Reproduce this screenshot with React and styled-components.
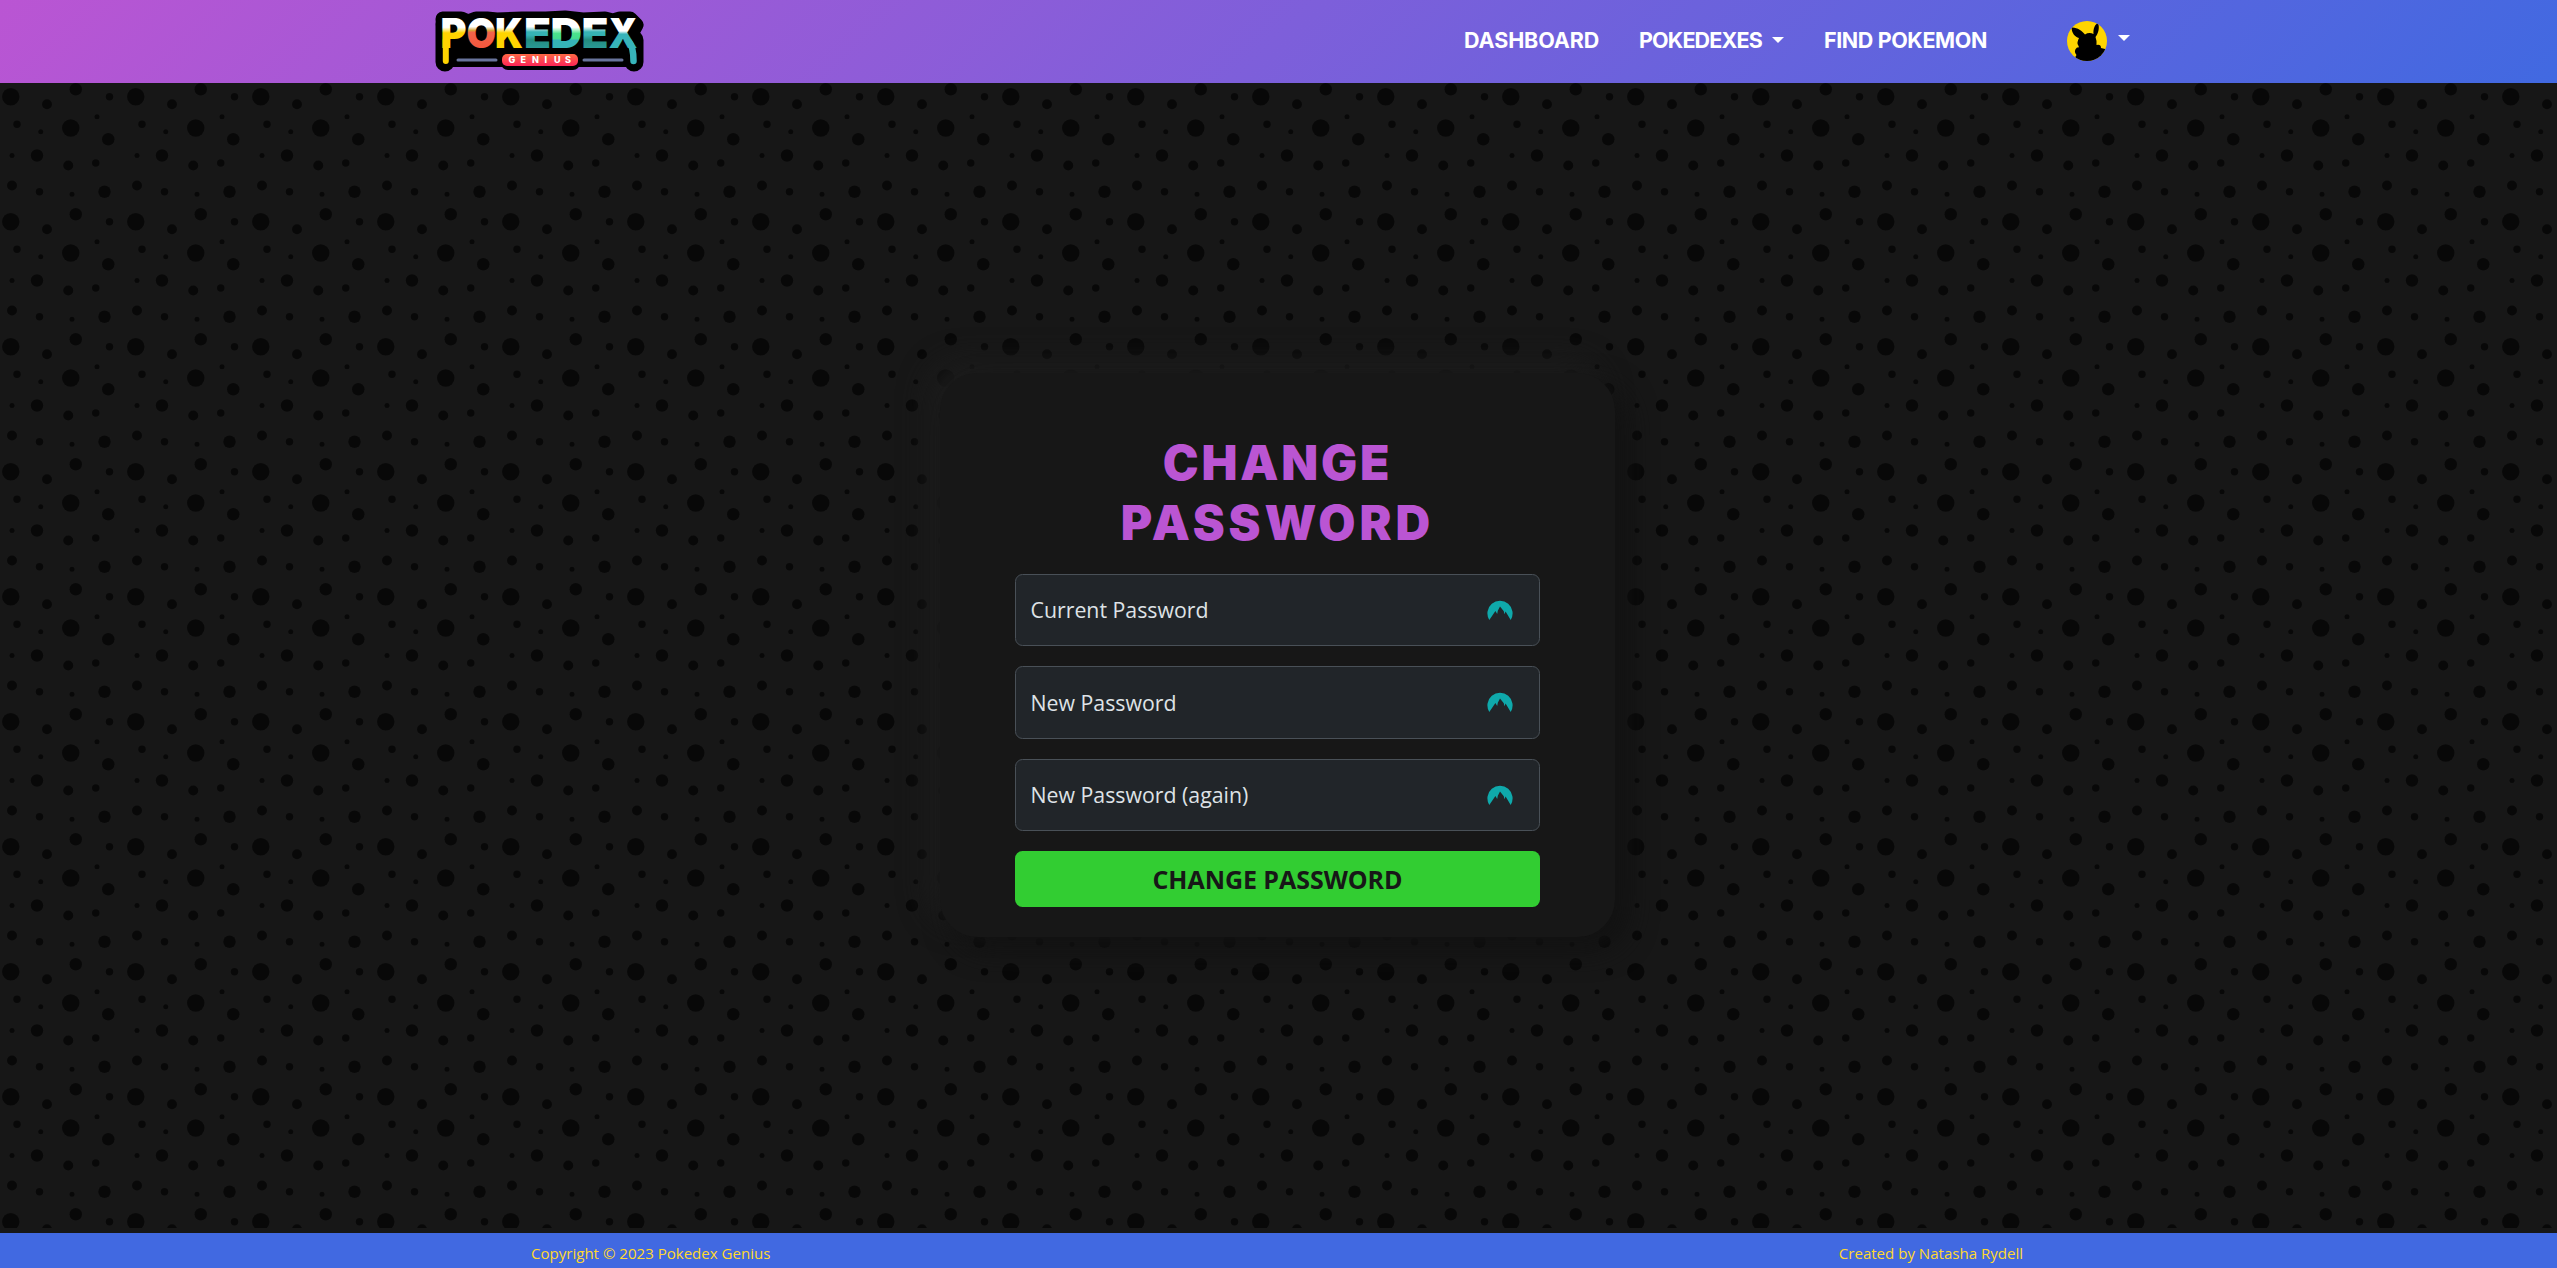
import React from "react";
import styled, { createGlobalStyle } from "styled-components";

const bubbles = [
  [11, 11, 7], [59, 36, 7], [16, 33, 3], [79, 64, 3], [34, 87, 3], [90, 11, 3],
  [12, 82, 4], [40, 17, 4], [63, 5, 5], [57, 66, 4], [86, 87, 5], [32, 58, 5],
  [89, 45, 5], [80, 27, 2], [60, 89, 2], [35, 39, 2], [12, 58, 2],
];

const bubbleTile = `url("data:image/svg+xml,${encodeURIComponent(
  `<svg xmlns="http://www.w3.org/2000/svg" width="125" height="125" viewBox="0 0 100 100">${bubbles
    .map(([x, y, r]) => `<circle cx="${x}" cy="${y}" r="${r}" fill="#080808"/>`)
    .join("")}</svg>`
)}")`;

const display = `Inter, "Liberation Sans", sans-serif`;
const body = `"Open Sans", "Noto Sans", sans-serif`;

const GlobalStyle = createGlobalStyle`
  * { box-sizing: border-box; }
  body { margin: 0; background: #171717; font-family: ${body}; }
`;

const Page = styled.div`
  display: flex;
  flex-direction: column;
  height: 1268px;
  overflow: hidden;
`;

const Nav = styled.nav`
  height: 83px;
  flex: none;
  padding: 0 427px 0 435px;
  display: flex;
  align-items: center;
  justify-content: space-between;
  background: linear-gradient(135deg, #ba55d3, #4169e1);
`;

const LogoSvg = styled.svg`
  width: 230px;
  height: 85px;
  margin-left: -10px;
  align-self: flex-start;
`;

const NavLinks = styled.div`
  display: flex;
  align-items: center;
  height: 100%;
`;

const NavLink = styled.a`
  display: flex;
  align-items: center;
  width: ${(p) => p.$width}px;
  margin-right: ${(p) => p.$gap}px;
  padding-bottom: 3px;
  color: #fff;
  font: 700 21.5px/32px ${display};
  letter-spacing: ${(p) => p.$track}px;
  white-space: nowrap;
`;

const Caret = styled.i`
  border: 6px solid transparent;
  border-top-color: #fff;
  border-bottom: 0;
  margin-left: auto;
`;

const Profile = styled.div`
  display: flex;
  align-items: center;
  gap: 11px;
  padding-bottom: 1px;

  ${Caret} { margin-bottom: 6px; }
`;

const Avatar = styled.svg`
  width: 40px;
  height: 40px;
  border-radius: 50%;
`;

const Main = styled.main`
  height: 1145px;
  flex: none;
  display: flex;
  justify-content: center;
  align-items: flex-start;
  padding-top: 290px;
  background: #171717 ${bubbleTile} -3px 0 / 125px 125px;
`;

const Card = styled.form`
  width: 675px;
  height: 564px;
  margin-right: 2px;
  padding: 60px 75px 30px;
  border-radius: 37.5px;
  background: #171717;
  box-shadow: 12.5px 12.5px 28px #121212, -12.5px -12.5px 28px #1d1d1d;
`;

const Title = styled.h1`
  margin: 0 0 20.5px;
  padding: 0 60px;
  color: #ba55d3;
  font: 900 48px/60px ${display};
  text-align: center;
`;

const TitleLine = styled.span`
  display: block;
  letter-spacing: ${(p) => p.$track}px;
`;

const Field = styled.label`
  display: flex;
  align-items: center;
  justify-content: space-between;
  height: 72.5px;
  margin-bottom: 20px;
  padding: 0 26px 0 14.5px;
  border: 1px solid #495057;
  border-radius: 7.5px;
  background: #212529;
  color: #dee2e6;
  font-size: 21.3px;
`;

const FieldIcon = styled.svg`
  width: 26px;
  height: 20px;
`;

const Submit = styled.button`
  display: block;
  width: 100%;
  height: 56px;
  border: 0;
  border-radius: 7.5px;
  background: #32cd32;
  color: #171717;
  font: 700 25px/36px ${body};
  letter-spacing: -0.05px;
`;

const Footer = styled.footer`
  height: 35px;
  margin-top: auto;
  padding: 5px 534px 0 531px;
  display: flex;
  justify-content: space-between;
  background: #4169e1;
  color: #ffd82e;
  font-size: 15.05px;
  line-height: 30px;
`;

const letters = [
  ["P", "url(#yellow)", 15.5, 26],
  ["O", "url(#red)", 41.5, 29.5],
  ["K", "url(#yellow)", 70, 28],
  ["E", "url(#teal)", 99, 27],
  ["D", "url(#green)", 125.5, 31.5],
  ["E", "url(#teal)", 156.5, 27],
  ["X", "url(#aqua)", 183.5, 29],
];

function Gradient({ id, stops }) {
  return (
    <linearGradient id={id} gradientUnits="userSpaceOnUse" x1="0" y1="18" x2="0" y2="49">
      {stops.map(([offset, color]) => (
        <stop key={offset} offset={offset} stopColor={color} />
      ))}
    </linearGradient>
  );
}

function Logo() {
  return (
    <LogoSvg viewBox="0 0 230 85" aria-label="Pokedex Genius">
      <defs>
        <Gradient id="yellow" stops={[[0, "#fff"], [0.3, "#fff"], [0.48, "#ffd400"], [1, "#ffd400"]]} />
        <Gradient id="red" stops={[[0, "#fff"], [0.28, "#fff"], [0.4, "#d8a53c"], [0.46, "#f0644a"], [1, "#f4553c"]]} />
        <Gradient id="teal" stops={[[0, "#fff"], [0.28, "#fff"], [0.45, "#36b3b4"], [0.55, "#36b3b4"], [0.7, "#238c80"], [1, "#2a9a97"]]} />
        <Gradient id="green" stops={[[0, "#fff"], [0.3, "#fff"], [0.5, "#4be38c"], [0.66, "#45dc90"], [0.72, "#35b3b7"], [1, "#35b3b7"]]} />
        <Gradient id="aqua" stops={[[0, "#fff"], [0.42, "#fff"], [0.52, "#37b4ba"], [1, "#37b4ba"]]} />
        <linearGradient id="pill" x1="0" y1="0" x2="0" y2="1">
          <stop offset="0" stopColor="#ff6a45" />
          <stop offset="1" stopColor="#ff2456" />
        </linearGradient>
      </defs>
      <g stroke="#000" strokeLinejoin="round" strokeLinecap="round" fill="none">
        <path strokeWidth="19" d="M20 24V62M209 40V62" />
        <path strokeWidth="14" d="M20 60H208M83 63H148" />
        <path strokeWidth="15" fill="#000" d="M18 19H36L43 22L51 19H62L72 20L97 19H121L140 18L158 20L180 19L188 21L195 19H205L211 25L205 36L209 48H20Z" />
      </g>
      <text y="48" fontFamily="Inter, sans-serif" fontWeight="900" fontSize="41.5">
        {letters.map(([ch, fill, x, width], i) => (
          <tspan
            key={i}
            x={x}
            textLength={width}
            lengthAdjust="spacingAndGlyphs"
            fill={fill}
          >
            {ch}
          </tspan>
        ))}
      </text>
      <path d="M20.8 40V61" stroke="#ffd400" strokeWidth="6" strokeLinecap="round" />
      <path d="M204 42Q208.500 47 208.500 61" stroke="#37b4ba" strokeWidth="6.500" strokeLinecap="round" fill="none" />
      <path d="M33 60H71M159 60H197" stroke="#68749c" strokeWidth="3" strokeLinecap="round" />
      <rect x="77" y="54" width="76" height="12" rx="5" fill="url(#pill)" />
      <text x="83.500 95.500 107 119.500 129 140" y="63.300" fill="#fff" fontFamily="Inter, sans-serif" fontWeight="800" fontSize="9">
        GENIUS
      </text>
    </LogoSvg>
  );
}

function Silhouette() {
  return (
    <Avatar viewBox="0 0 40 40">
      <rect width="40" height="40" fill="#ffd500" />
      <path d="M4.500 6.500C10 6 15 10 18 13.500Q22 11 26.500 13C26 8 28 3 31 2C33 7 31 13 28.500 16Q30 20 29.500 24Q34 23 34 27L38 28V40H10Q7 37 9.500 34Q6 30 10 26.500Q13 27 11 24Q9.500 22 12 17C8 15.500 5 13 4.500 6.500Z" />
    </Avatar>
  );
}

function PasswordField({ label }) {
  return (
    <Field>
      <span>{label}</span>
      <FieldIcon viewBox="0 0 26 20">
        <path fill="#0fa9ab" d="M2.300 20A12.600 12.600 0 1 1 23.700 20L18.600 11.500L17.400 14.200L16.800 11.300L13 6.500L10.800 10.800L10.200 14L8.400 11Z" />
      </FieldIcon>
    </Field>
  );
}

export default function App() {
  return (
    <Page>
      <GlobalStyle />
      <Nav>
        <Logo />
        <NavLinks>
          <NavLink $width={136} $gap={39} $track={-0.1}>DASHBOARD</NavLink>
          <NavLink $width={145} $gap={40} $track={-0.85}>POKEDEXES<Caret /></NavLink>
          <NavLink $width={163} $gap={80} $track={-0.4}>FIND POKEMON</NavLink>
          <Profile>
            <Silhouette />
            <Caret />
          </Profile>
        </NavLinks>
      </Nav>
      <Main>
        <Card>
          <Title>
            <TitleLine $track={2.8}>CHANGE</TitleLine>
            <TitleLine $track={4}>PASSWORD</TitleLine>
          </Title>
          <PasswordField label="Current Password" />
          <PasswordField label="New Password" />
          <PasswordField label="New Password (again)" />
          <Submit type="button">CHANGE PASSWORD</Submit>
        </Card>
      </Main>
      <Footer>
        <span>Copyright © 2023 Pokedex Genius</span>
        <span>Created by Natasha Rydell</span>
      </Footer>
    </Page>
  );
}
